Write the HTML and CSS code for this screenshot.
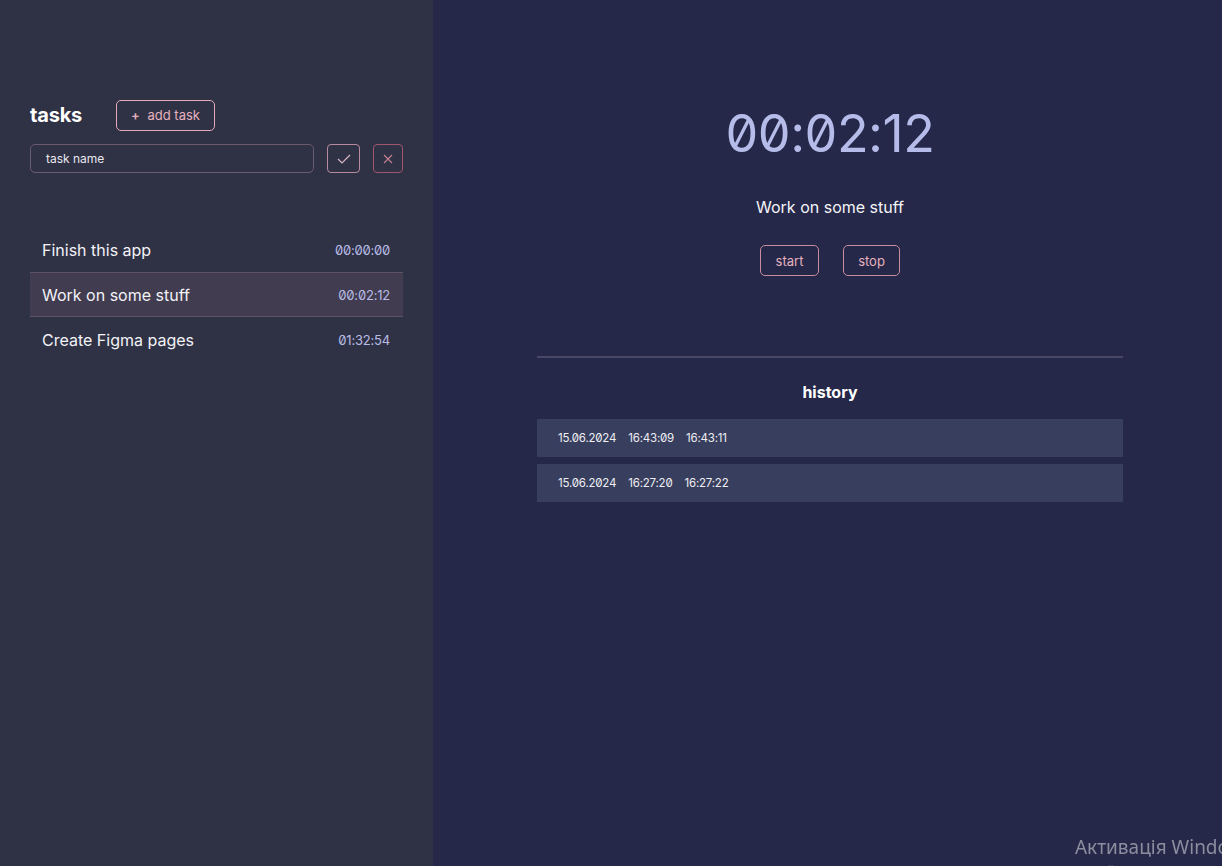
FILE: index.html
```html
<!DOCTYPE html>
<html lang="en">
<head>
<meta charset="utf-8">
<title>tasks</title>
<link rel="stylesheet" href="styles.css">
</head>
<body>
<div class="app">
  <aside class="sidebar">
    <div class="head">
      <h1 class="title">tasks</h1>
      <button class="btn add"><span class="plus">+</span> add task</button>
    </div>
    <div class="newtask">
      <div class="input">task name</div>
      <button class="icon-btn ok"><svg width="14" height="10" viewBox="0 0 14 10"><path d="M1 5 L5 9 L13 1" fill="none" stroke="#d8b6c4" stroke-width="1.2"/></svg></button>
      <button class="icon-btn cancel"><svg width="10" height="10" viewBox="0 0 10 10"><path d="M1 1 L9 9 M9 1 L1 9" fill="none" stroke="#c47f93" stroke-width="1.1"/></svg></button>
    </div>
    <ul class="list">
      <li class="row"><span class="name">Finish this app</span><span class="time">00:00:00</span></li>
      <li class="row active"><span class="name">Work on some stuff</span><span class="time">00:02:12</span></li>
      <li class="row"><span class="name">Create Figma pages</span><span class="time">01:32:54</span></li>
    </ul>
  </aside>
  <main class="main">
    <div class="timer">00:02:12</div>
    <div class="current">Work on some stuff</div>
    <div class="controls">
      <button class="btn ctl">start</button>
      <button class="btn ctl">stop</button>
    </div>
    <section class="history">
      <h2 class="htitle">history</h2>
      <div class="hrow"><span>15.06.2024</span><span>16:43:09</span><span>16:43:11</span></div>
      <div class="hrow"><span>15.06.2024</span><span>16:27:20</span><span>16:27:22</span></div>
    </section>
  </main>
</div>
<div class="watermark"><div class="wm1">Активація Windows</div><div class="wm2">Перейдіть до параметрів, щоб активувати Windows.</div></div>
</body>
</html>
```
FILE: styles.css
```css
* { box-sizing: border-box; }
html, body { margin: 0; padding: 0; height: 100%; }
body {
  font-family: Inter, "Noto Sans", sans-serif;
  color: #f2f2f6;
  background: #252849;
  overflow: hidden;
}
.app { display: flex; height: 866px; }
.sidebar {
  width: 433px;
  flex: none;
  background: #2f3145;
  padding: 100px 30px 0 30px;
}
.head { display: flex; align-items: center; height: 30px; }
.title {
  margin: 0;
  font-size: 20px;
  font-weight: 700;
  width: 86px;
  color: #ffffff;
  letter-spacing: -0.2px;
}
.btn {
  font-family: inherit;
  background: transparent;
  border: 1px solid #e3a9b7;
  border-radius: 5px;
  color: #e6b1bf;
  cursor: pointer;
}
.add {
  width: 99px;
  height: 31px;
  font-size: 13px;
  padding: 0;
}
.plus { font-weight: 600; margin-right: 4px; }
.newtask { display: flex; align-items: center; margin-top: 14px; height: 29px; }
.input {
  width: 284px;
  height: 29px;
  border: 1px solid #6c5a6e;
  border-radius: 5px;
  font-size: 12px;
  color: #e8e8ee;
  padding: 0 0 0 15px;
  line-height: 27px;
}
.icon-btn {
  height: 29px;
  background: transparent;
  border-radius: 4px;
  display: flex;
  align-items: center;
  justify-content: center;
  padding: 0;
}
.ok { width: 33px; margin-left: 13px; border: 1px solid #b88a9d; }
.cancel { width: 30px; margin-left: 13px; border: 1px solid #a0566c; }
.list { list-style: none; margin: 54px 0 0 0; padding: 0; }
.row {
  display: flex;
  justify-content: space-between;
  align-items: center;
  height: 45px;
  padding: 0 13px 0 12px;
  border-top: 1px solid transparent;
  border-bottom: 1px solid transparent;
}
.row.active {
  background: #413c4f;
  border-top-color: #5d5163;
  border-bottom-color: #5d5163;
}
.name { font-size: 16px; color: #f3f3f7; }
.time {
  font-size: 13px;
  color: #b9bde6;
  font-variant-numeric: slashed-zero;
  letter-spacing: -0.2px;
}
.main {
  flex: 1;
  display: flex;
  flex-direction: column;
  align-items: center;
  padding-top: 101px;
}
.timer {
  font-size: 52px;
  line-height: 66px;
  color: #b6bce9;
  font-variant-numeric: slashed-zero;
  letter-spacing: -0.5px;
  margin-left: 5px;
}
.current { margin-top: 30px; font-size: 16px; color: #f5f5f8; margin-left: 5px; }
.controls { display: flex; gap: 24px; margin-top: 28px; margin-left: 5px; }
.ctl { height: 31px; font-size: 13px; padding: 0; border-color: #c98c9f; }
.ctl:first-child { width: 59px; }
.ctl:last-child { width: 57px; }
.history {
  width: 586px;
  margin-top: 80px;
  margin-left: 5px;
  border-top: 2px solid #4a4765;
}
.htitle {
  margin: 24px 0 17px;
  text-align: center;
  font-size: 16px;
  font-weight: 700;
  color: #ffffff;
  line-height: 20px;
}
.hrow {
  height: 38px;
  background: #383e5d;
  margin-bottom: 7px;
  display: flex;
  align-items: center;
  padding-left: 21px;
  gap: 12px;
  font-size: 11.5px;
  color: #eeeef4;
  font-variant-numeric: slashed-zero;
  letter-spacing: -0.2px;
}
.watermark {
  position: fixed;
  left: 1075px;
  top: 835px;
  white-space: nowrap;
  color: #8b8e9e;
  font-family: "Segoe UI", "Noto Sans", "Open Sans", sans-serif;
}
.wm1 { font-size: 19px; line-height: 24px; }
.wm2 { font-size: 13px; line-height: 18px; margin-top: 2px; }
```
